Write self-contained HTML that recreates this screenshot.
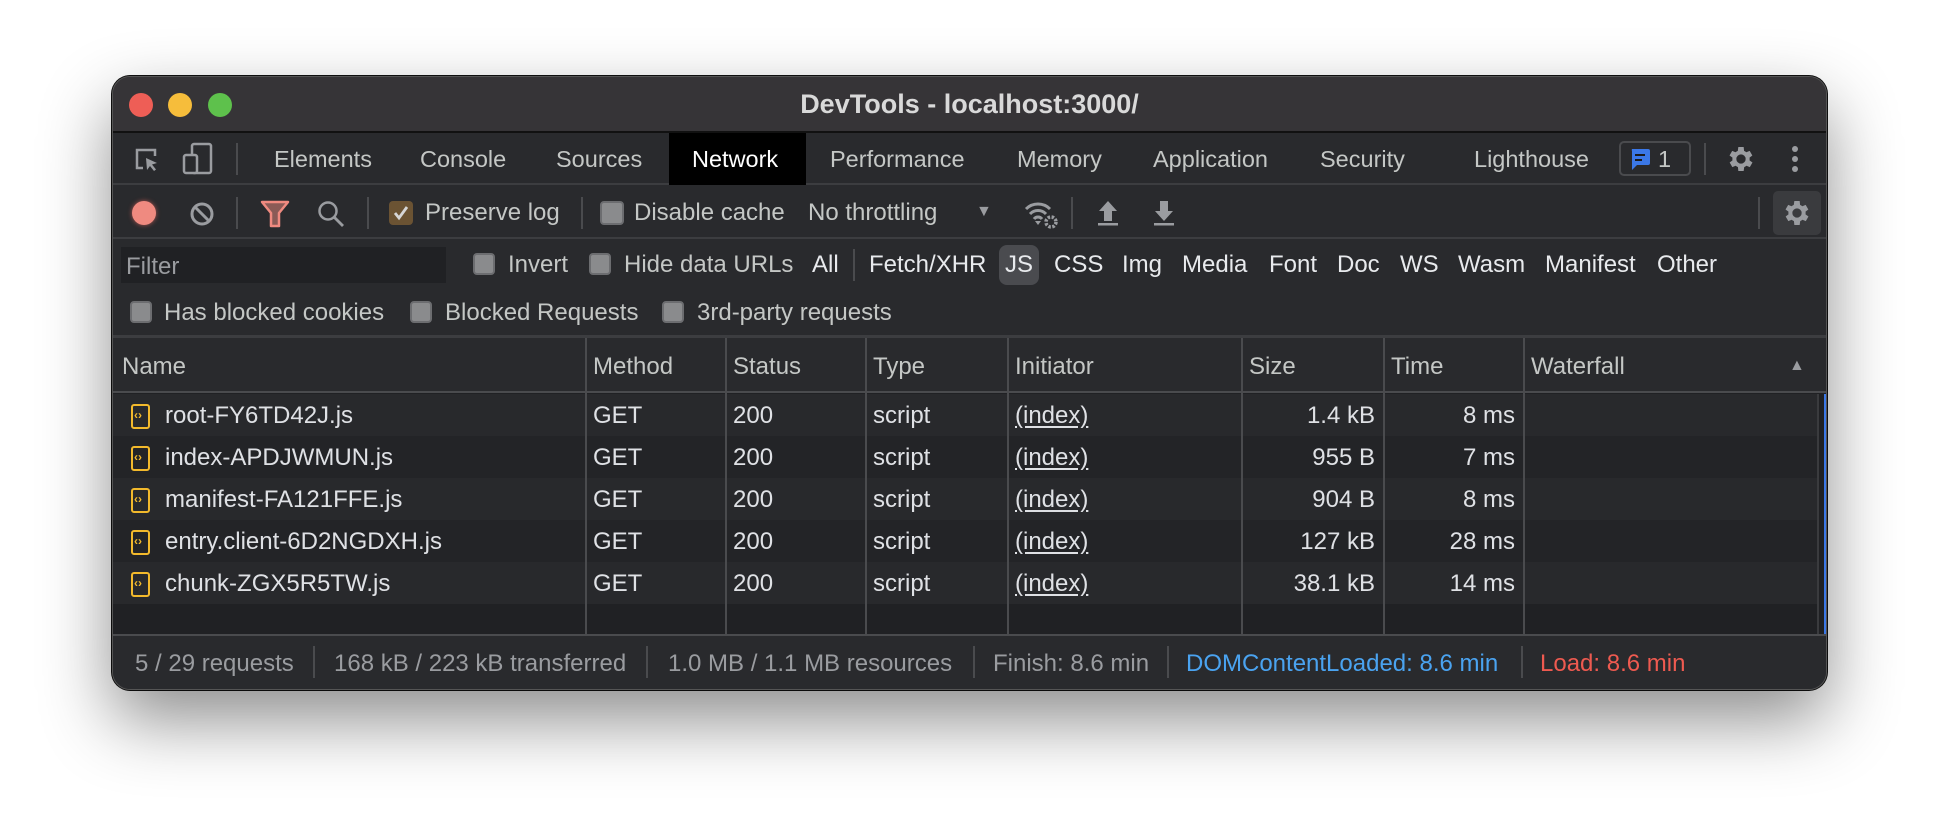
<!DOCTYPE html>
<html><head><meta charset="utf-8">
<style>
*{margin:0;padding:0;box-sizing:border-box}
body{width:1940px;height:838px;background:#fff;position:relative;overflow:hidden;font-family:"Liberation Sans",sans-serif;font-size:24px;color:#c4c7c5}
.win{position:absolute;left:112px;top:76px;width:1715px;height:614px;background:#292a2d;border-radius:18px;overflow:hidden;box-shadow:0 30px 70px rgba(0,0,0,.45),0 0 0 1px #111;border:1px solid #555}
.a{position:absolute;white-space:nowrap;line-height:1}
.title{position:absolute;left:0;top:0;width:100%;height:56px;background:#363437;border-bottom:2px solid #111}
.dot{position:absolute;top:16px;width:24px;height:24px;border-radius:50%}
.bar{position:absolute;left:0;width:100%}
.sep{position:absolute;width:2px;background:#4a4b4e}
.cb{position:absolute;width:22px;height:22px;border-radius:4px;background:#8a8b8d;border:2px solid #6c6d70}
.hl{position:absolute;top:0;bottom:0;width:2px;background:#4a4b4e}
.row{position:absolute;left:0;width:1705px;height:42px}
.row .a{top:10px;color:#dfe1e5}
.ico{position:absolute;left:18px;top:10px;width:19px;height:25px;border:2px solid #f2b92c;border-radius:3px}
.ico:after{content:"‹›";position:absolute;left:1px;top:3px;font-size:12px;color:#f2b92c;font-weight:bold;line-height:1}
.u{text-decoration:underline;text-underline-offset:3px}
.tab{font-size:23.5px;top:15px}
</style></head><body>
<div class="win">
 <div class="title">
  <div class="dot" style="left:16px;background:#ee5e56"></div>
  <div class="dot" style="left:55px;background:#f6bd3b"></div>
  <div class="dot" style="left:95px;background:#5ec14c"></div>
  <div class="a" style="left:0;width:100%;text-align:center;top:14px;font-size:27px;font-weight:bold;color:#d9d9d9">DevTools - localhost:3000/</div>
 </div>
 <div class="bar" style="top:56px;height:52px;background:#292a2d;border-bottom:2px solid #3c3d40">
  <svg class="a" style="left:20px;top:13px" width="28" height="28" viewBox="0 0 28 28"><path d="M10 22H4V4h18v6" fill="none" stroke="#9a9ca0" stroke-width="2.5"/><path d="M13 12l11 5-5 1.5 4 5-2 1.5-4-5-3 4z" fill="#9a9ca0"/></svg>
  <svg class="a" style="left:69px;top:9px" width="32" height="34" viewBox="0 0 32 34"><rect x="10" y="2" width="19" height="29" rx="2" fill="none" stroke="#9a9ca0" stroke-width="2.5"/><rect x="2" y="13" width="13" height="18" rx="2" fill="#292a2d" stroke="#9a9ca0" stroke-width="2.5"/></svg>
  <div class="sep" style="left:123px;top:10px;height:32px"></div>
  <div class="a tab" style="left:161px">Elements</div>
  <div class="a tab" style="left:307px">Console</div>
  <div class="a tab" style="left:443px">Sources</div>
  <div style="position:absolute;left:556px;top:0;width:137px;height:52px;background:#000"></div>
  <div class="a tab" style="left:579px;color:#fff">Network</div>
  <div class="a tab" style="left:717px">Performance</div>
  <div class="a tab" style="left:904px">Memory</div>
  <div class="a tab" style="left:1040px">Application</div>
  <div class="a tab" style="left:1207px">Security</div>
  <div class="a tab" style="left:1361px">Lighthouse</div>
  <div style="position:absolute;left:1506px;top:8px;width:72px;height:35px;border:2px solid #4a4b4e;border-radius:5px"></div>
  <svg class="a" style="left:1516px;top:15px" width="22" height="24" viewBox="0 0 22 24"><path d="M3 1h16a2 2 0 0 1 2 2v12a2 2 0 0 1-2 2H8l-5 5V3a2 2 0 0 1 0-2z" fill="#3b78e7"/><rect x="6" y="6" width="10" height="2" fill="#1b1b1b"/><rect x="6" y="11" width="7" height="2" fill="#1b1b1b"/></svg>
  <div class="a tab" style="left:1545px;color:#c4c7c5">1</div>
  <div class="sep" style="left:1591px;top:10px;height:32px"></div>
  <svg class="a" style="left:1612px;top:10px" width="32" height="32" viewBox="0 0 24 24"><path fill="#9a9ca0" d="M19.4 13a7.5 7.5 0 0 0 0-2l2.1-1.6-2-3.5-2.5 1a7 7 0 0 0-1.7-1L15 3h-4l-.4 2.9a7 7 0 0 0-1.7 1l-2.5-1-2 3.5L6.6 11a7.5 7.5 0 0 0 0 2l-2.1 1.6 2 3.5 2.5-1a7 7 0 0 0 1.7 1L11 21h4l.4-2.9a7 7 0 0 0 1.7-1l2.5 1 2-3.5zM13 15.5A3.5 3.5 0 1 1 13 8.5a3.5 3.5 0 0 1 0 7z" transform="translate(-1 0)"/></svg>
  <svg class="a" style="left:1678px;top:12px" width="8" height="28"><circle cx="4" cy="4" r="3" fill="#9a9ca0"/><circle cx="4" cy="14" r="3" fill="#9a9ca0"/><circle cx="4" cy="24" r="3" fill="#9a9ca0"/></svg>
 </div>
 <div class="bar" style="top:110px;height:52px;border-bottom:2px solid #3c3d40">
  <div style="position:absolute;left:19px;top:14px;width:24px;height:24px;border-radius:50%;background:#ef8a80;box-shadow:0 0 5px #b05550"></div>
  <svg class="a" style="left:76px;top:14px" width="26" height="26" viewBox="0 0 26 26"><circle cx="13" cy="13" r="10" fill="none" stroke="#9a9ca0" stroke-width="3"/><path d="M6 6l14 14" stroke="#9a9ca0" stroke-width="3"/></svg>
  <div class="sep" style="left:123px;top:10px;height:32px"></div>
  <svg class="a" style="left:147px;top:13px" width="30" height="28" viewBox="0 0 30 28"><path d="M2 2h26l-9 11v13h-8V13z" fill="#8a5a56" stroke="#ef8a80" stroke-width="2.5" stroke-linejoin="round"/></svg>
  <svg class="a" style="left:203px;top:12px" width="30" height="30" viewBox="0 0 30 30"><circle cx="12" cy="12" r="8.5" fill="none" stroke="#9a9ca0" stroke-width="2.5"/><path d="M18 18l9 9" stroke="#9a9ca0" stroke-width="2.8"/></svg>
  <div class="sep" style="left:254px;top:10px;height:32px"></div>
  <div style="position:absolute;left:276px;top:14px;width:24px;height:24px;border-radius:4px;background:#6b5333"></div>
  <svg class="a" style="left:279px;top:17px" width="18" height="18" viewBox="0 0 18 18"><path d="M3 9l4 5 8-11" fill="none" stroke="#d6d6d6" stroke-width="2.8"/></svg>
  <div class="a" style="left:312px;top:14px">Preserve log</div>
  <div class="sep" style="left:468px;top:10px;height:32px"></div>
  <div class="cb" style="left:487px;top:14px;width:24px;height:24px"></div>
  <div class="a" style="left:521px;top:14px">Disable cache</div>
  <div class="a" style="left:695px;top:14px">No throttling</div>
  <div class="a" style="left:863px;top:17px;font-size:16px;color:#9a9ca0">▼</div>
  <svg class="a" style="left:910px;top:13px" width="38" height="30" viewBox="0 0 38 30"><path d="M3 9a17 17 0 0 1 24 0M7 14a11 11 0 0 1 16 0M11 19a5 5 0 0 1 8 0" fill="none" stroke="#9a9ca0" stroke-width="3"/><path d="M12 21h6l-3 4z" fill="#9a9ca0"/><circle cx="28" cy="22" r="5" fill="none" stroke="#9a9ca0" stroke-width="3.5" stroke-dasharray="2.5 1.5"/></svg>
  <div class="sep" style="left:958px;top:10px;height:32px"></div>
  <svg class="a" style="left:985px;top:12px" width="20" height="28" viewBox="0 0 20 28"><path d="M10 2l9 10h-5v10H6V12H1z" fill="#9a9ca0"/><rect x="0" y="24" width="20" height="2.5" fill="#9a9ca0"/></svg>
  <svg class="a" style="left:1041px;top:12px" width="20" height="28" viewBox="0 0 20 28"><path d="M10 22l9-10h-5V2H6v10H1z" fill="#9a9ca0"/><rect x="0" y="24" width="20" height="2.5" fill="#9a9ca0"/></svg>
  <div class="sep" style="left:1645px;top:10px;height:32px"></div>
  <div style="position:absolute;left:1660px;top:4px;width:48px;height:44px;background:#3a3b3e;border-radius:5px"></div>
  <svg class="a" style="left:1668px;top:10px" width="32" height="32" viewBox="0 0 24 24"><path fill="#9a9ca0" d="M19.4 13a7.5 7.5 0 0 0 0-2l2.1-1.6-2-3.5-2.5 1a7 7 0 0 0-1.7-1L15 3h-4l-.4 2.9a7 7 0 0 0-1.7 1l-2.5-1-2 3.5L6.6 11a7.5 7.5 0 0 0 0 2l-2.1 1.6 2 3.5 2.5-1a7 7 0 0 0 1.7 1L11 21h4l.4-2.9a7 7 0 0 0 1.7-1l2.5 1 2-3.5zM13 15.5A3.5 3.5 0 1 1 13 8.5a3.5 3.5 0 0 1 0 7z" transform="translate(-1 0)"/></svg>
 </div>
 <div class="bar" style="top:164px;height:97px;border-bottom:3px solid #3c3d40">
  <div style="position:absolute;left:8px;top:6px;width:325px;height:36px;background:#202124"></div>
  <div class="a" style="left:13px;top:14px;color:#9a9ca0">Filter</div>
  <div class="cb" style="left:360px;top:12px"></div><div class="a" style="left:395px;top:12px">Invert</div>
  <div class="cb" style="left:476px;top:12px"></div><div class="a" style="left:511px;top:12px">Hide data URLs</div>
  <div class="a" style="left:699px;top:12px;color:#e8eaed">All</div>
  <div class="sep" style="left:740px;top:8px;height:32px"></div>
  <div class="a" style="left:756px;top:12px;color:#e8eaed">Fetch/XHR</div>
  <div style="position:absolute;left:886px;top:4px;width:40px;height:40px;background:#4a4b4f;border-radius:8px"></div>
  <div class="a" style="left:892px;top:12px;color:#e8eaed">JS</div>
  <div class="a" style="left:941px;top:12px;color:#e8eaed">CSS</div>
  <div class="a" style="left:1009px;top:12px;color:#e8eaed">Img</div>
  <div class="a" style="left:1069px;top:12px;color:#e8eaed">Media</div>
  <div class="a" style="left:1156px;top:12px;color:#e8eaed">Font</div>
  <div class="a" style="left:1224px;top:12px;color:#e8eaed">Doc</div>
  <div class="a" style="left:1287px;top:12px;color:#e8eaed">WS</div>
  <div class="a" style="left:1345px;top:12px;color:#e8eaed">Wasm</div>
  <div class="a" style="left:1432px;top:12px;color:#e8eaed">Manifest</div>
  <div class="a" style="left:1544px;top:12px;color:#e8eaed">Other</div>
  <div class="cb" style="left:17px;top:60px"></div><div class="a" style="left:51px;top:60px">Has blocked cookies</div>
  <div class="cb" style="left:297px;top:60px"></div><div class="a" style="left:332px;top:60px">Blocked Requests</div>
  <div class="cb" style="left:549px;top:60px"></div><div class="a" style="left:584px;top:60px">3rd-party requests</div>
 </div>
 <div class="bar" style="top:261px;height:297px;background:#202124">
  <div class="bar" style="top:0;height:55px;background:#292a2d;border-bottom:2px solid #4a4b4e"></div>
  <div class="row" style="top:56px;background:#28292c"></div>
  <div class="row" style="top:98px;background:#232427"></div>
  <div class="row" style="top:140px;background:#28292c"></div>
  <div class="row" style="top:182px;background:#232427"></div>
  <div class="row" style="top:224px;background:#28292c"></div>
  <div class="hl" style="left:472px"></div><div class="hl" style="left:612px"></div><div class="hl" style="left:752px"></div><div class="hl" style="left:894px"></div><div class="hl" style="left:1128px"></div><div class="hl" style="left:1270px"></div><div class="hl" style="left:1410px"></div>
  <div class="hl" style="left:1704px;top:56px;background:#3a3b3e"></div>
  <div style="position:absolute;left:1711px;top:56px;width:2px;bottom:0;background:#3b78e7"></div>
  <div class="a" style="left:9px;top:17px">Name</div>
  <div class="a" style="left:480px;top:17px">Method</div>
  <div class="a" style="left:620px;top:17px">Status</div>
  <div class="a" style="left:760px;top:17px">Type</div>
  <div class="a" style="left:902px;top:17px">Initiator</div>
  <div class="a" style="left:1136px;top:17px">Size</div>
  <div class="a" style="left:1278px;top:17px">Time</div>
  <div class="a" style="left:1418px;top:17px">Waterfall</div>
  <div class="a" style="left:1676px;top:20px;font-size:16px;color:#9a9ca0">▲</div>
  <div class="row" style="top:56px"><div class="ico"></div><div class="a" style="left:52px">root-FY6TD42J.js</div><div class="a" style="left:480px">GET</div><div class="a" style="left:620px">200</div><div class="a" style="left:760px">script</div><div class="a u" style="left:902px">(index)</div><div class="a" style="right:443px">1.4 kB</div><div class="a" style="right:303px">8 ms</div></div>
  <div class="row" style="top:98px"><div class="ico"></div><div class="a" style="left:52px">index-APDJWMUN.js</div><div class="a" style="left:480px">GET</div><div class="a" style="left:620px">200</div><div class="a" style="left:760px">script</div><div class="a u" style="left:902px">(index)</div><div class="a" style="right:443px">955 B</div><div class="a" style="right:303px">7 ms</div></div>
  <div class="row" style="top:140px"><div class="ico"></div><div class="a" style="left:52px">manifest-FA121FFE.js</div><div class="a" style="left:480px">GET</div><div class="a" style="left:620px">200</div><div class="a" style="left:760px">script</div><div class="a u" style="left:902px">(index)</div><div class="a" style="right:443px">904 B</div><div class="a" style="right:303px">8 ms</div></div>
  <div class="row" style="top:182px"><div class="ico"></div><div class="a" style="left:52px">entry.client-6D2NGDXH.js</div><div class="a" style="left:480px">GET</div><div class="a" style="left:620px">200</div><div class="a" style="left:760px">script</div><div class="a u" style="left:902px">(index)</div><div class="a" style="right:443px">127 kB</div><div class="a" style="right:303px">28 ms</div></div>
  <div class="row" style="top:224px"><div class="ico"></div><div class="a" style="left:52px">chunk-ZGX5R5TW.js</div><div class="a" style="left:480px">GET</div><div class="a" style="left:620px">200</div><div class="a" style="left:760px">script</div><div class="a u" style="left:902px">(index)</div><div class="a" style="right:443px">38.1 kB</div><div class="a" style="right:303px">14 ms</div></div>
 </div>
 <div class="bar" style="top:557px;height:57px;background:#292a2d;border-top:2px solid #4a4b4e">
  <div class="a" style="left:22px;top:16px;color:#9a9ca0">5 / 29 requests</div>
  <div class="sep" style="left:200px;top:10px;height:32px"></div>
  <div class="a" style="left:221px;top:16px;color:#9a9ca0">168 kB / 223 kB transferred</div>
  <div class="sep" style="left:533px;top:10px;height:32px"></div>
  <div class="a" style="left:555px;top:16px;color:#9a9ca0">1.0 MB / 1.1 MB resources</div>
  <div class="sep" style="left:860px;top:10px;height:32px"></div>
  <div class="a" style="left:880px;top:16px;color:#9a9ca0">Finish: 8.6 min</div>
  <div class="sep" style="left:1054px;top:10px;height:32px"></div>
  <div class="a" style="left:1073px;top:16px;color:#4aa3f0">DOMContentLoaded: 8.6 min</div>
  <div class="sep" style="left:1408px;top:10px;height:32px"></div>
  <div class="a" style="left:1427px;top:16px;color:#ee5a50">Load: 8.6 min</div>
 </div>
</div>
</body></html>
